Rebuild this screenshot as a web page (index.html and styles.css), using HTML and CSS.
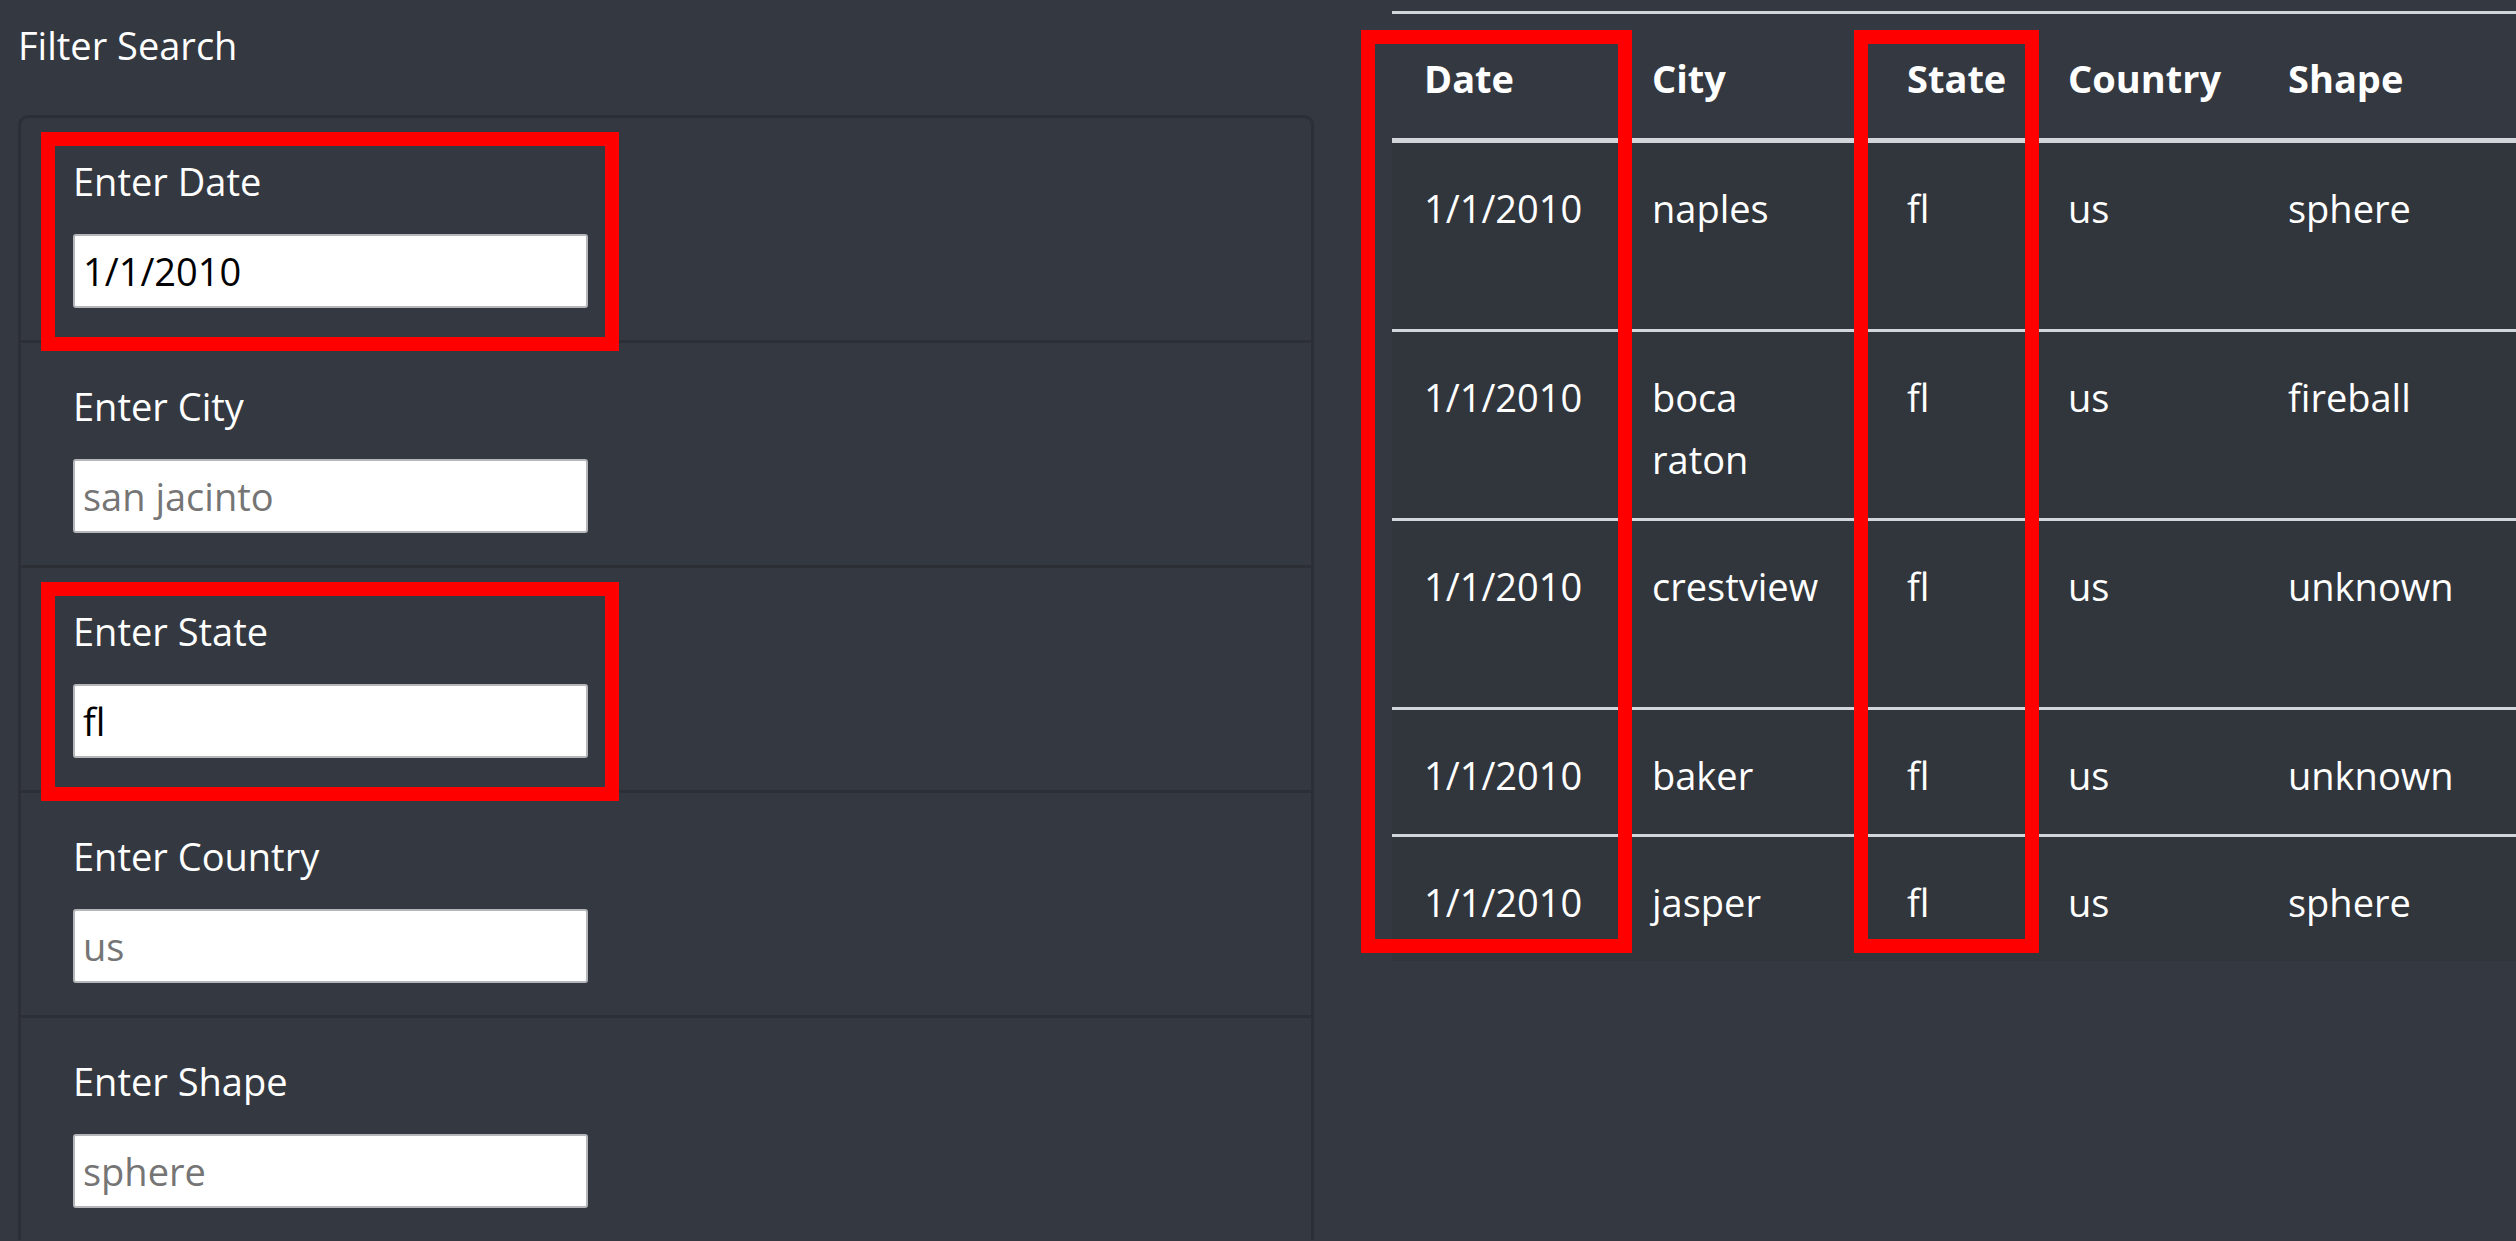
FILE: index.html
```html
<!DOCTYPE html>
<html lang="en">
<head>
<meta charset="utf-8">
<title>UFO Sightings – Filter Search</title>
<link rel="stylesheet" href="styles.css">
</head>
<body>
<div class="page">
  <aside class="filters">
    <h2 class="filters-title">Filter Search</h2>
    <ul class="filter-list">
      <li class="filter-item">
        <label class="filter-label" for="datetime">Enter Date</label>
        <input class="filter-input" id="datetime" type="text" value="1/1/2010" placeholder="1/1/2010">
        <span class="highlight highlight-item" aria-hidden="true"></span>
      </li>
      <li class="filter-item">
        <label class="filter-label" for="city">Enter City</label>
        <input class="filter-input" id="city" type="text" placeholder="san jacinto">
      </li>
      <li class="filter-item">
        <label class="filter-label" for="state">Enter State</label>
        <input class="filter-input" id="state" type="text" value="fl" placeholder="ca">
        <span class="highlight highlight-item" aria-hidden="true"></span>
      </li>
      <li class="filter-item">
        <label class="filter-label" for="country">Enter Country</label>
        <input class="filter-input" id="country" type="text" placeholder="us">
      </li>
      <li class="filter-item">
        <label class="filter-label" for="shape">Enter Shape</label>
        <input class="filter-input" id="shape" type="text" placeholder="sphere">
      </li>
    </ul>
  </aside>
  <main class="results">
    <table class="ufo-table">
      <thead>
        <tr>
          <th class="c-date">Date</th>
          <th class="c-city">City</th>
          <th class="c-state">State</th>
          <th class="c-country">Country</th>
          <th class="c-shape">Shape</th>
        </tr>
      </thead>
      <tbody>
        <tr class="tall">
          <td>1/1/2010</td><td class="city">naples</td><td>fl</td><td>us</td><td>sphere</td>
        </tr>
        <tr>
          <td>1/1/2010</td><td class="city">boca raton</td><td>fl</td><td>us</td><td>fireball</td>
        </tr>
        <tr class="tall">
          <td>1/1/2010</td><td class="city">crestview</td><td>fl</td><td>us</td><td>unknown</td>
        </tr>
        <tr>
          <td>1/1/2010</td><td class="city">baker</td><td>fl</td><td>us</td><td>unknown</td>
        </tr>
        <tr>
          <td>1/1/2010</td><td class="city">jasper</td><td>fl</td><td>us</td><td>sphere</td>
        </tr>
      </tbody>
    </table>
    <span class="highlight highlight-date" aria-hidden="true"></span>
    <span class="highlight highlight-state" aria-hidden="true"></span>
  </main>
</div>
</body>
</html>
```
FILE: styles.css
```css
* {
  box-sizing: border-box;
}

html, body {
  margin: 0;
  padding: 0;
  height: 100%;
  overflow: hidden;
}

body {
  background: #343840;
  color: #ffffff;
  font-family: "Open Sans", "Noto Sans", "Liberation Sans", sans-serif;
  font-size: 38px;
  line-height: 60px;
}

.page {
  display: flex;
  align-items: flex-start;
  padding-left: 18px;
}

/* ---------- annotation boxes ---------- */
.highlight {
  position: absolute;
  z-index: 5;
  border: 14px solid #ff0000;
  pointer-events: none;
}

/* ---------- left: filters ---------- */
.filters {
  flex: none;
  width: 1296px;
}

.filters-title {
  margin: 15px 0 40px 0;
  font-size: 38px;
  font-weight: 400;
  line-height: 60px;
}

.filter-list {
  list-style: none;
  margin: 0;
  padding: 0;
  border: 3px solid #2c3036;
  border-bottom: none;
  border-radius: 10px 10px 0 0;
}

.filter-item {
  position: relative;
  display: flex;
  flex-direction: column;
  align-items: flex-start;
  padding: 33px 52px 32px 52px;
}

.filter-item + .filter-item {
  border-top: 3px solid #2c3036;
}

.highlight-item {
  top: 14px;
  left: 20px;
  width: 578px;
  height: 219px;
}

.filter-label {
  display: block;
  line-height: 60px;
  margin-bottom: 23px;
}

.filter-input {
  width: 515px;
  height: 74px;
  margin: 0;
  padding: 0 8px;
  background: #ffffff;
  border: 2px solid #b4b6b9;
  border-radius: 3px;
  color: #000000;
  font-family: "Open Sans", "Noto Sans", "Liberation Sans", sans-serif;
  font-size: 38px;
  outline: none;
}

.filter-input::placeholder {
  color: #757575;
  opacity: 1;
}

/* ---------- right: results table ---------- */
.results {
  position: relative;
  flex: 1;
  min-width: 0;
  margin-left: 40px;
  padding-left: 38px;
  overflow: hidden;
}

.highlight-date {
  top: 30px;
  left: 7px;
  width: 271px;
  height: 923px;
}

.highlight-state {
  top: 30px;
  left: 500px;
  width: 185px;
  height: 923px;
}

.ufo-table {
  width: 100%;
  margin-top: 11px;
  table-layout: fixed;
  border-collapse: separate;
  border-spacing: 0;
  text-align: left;
}

.ufo-table th,
.ufo-table td {
  padding: 34px 30px 28px 32px;
  line-height: 62px;
  vertical-align: top;
  font-size: 38px;
}

.ufo-table th {
  padding-top: 33px;
  padding-bottom: 29px;
  font-weight: 700;
  border-top: 3px solid #d2d5d9;
  border-bottom: 5px solid #d2d5d9;
}

.c-date { width: 228px; }
.c-city { width: 255px; }
.c-state { width: 161px; }
.c-country { width: 220px; }

.ufo-table tbody tr {
  background: #31353c;
}

.ufo-table tbody tr + tr td {
  border-top: 3px solid #d2d5d9;
}

.ufo-table td.city {
  padding-right: 50px;
}

.ufo-table tr.tall td {
  padding-bottom: 90px;
}
```
